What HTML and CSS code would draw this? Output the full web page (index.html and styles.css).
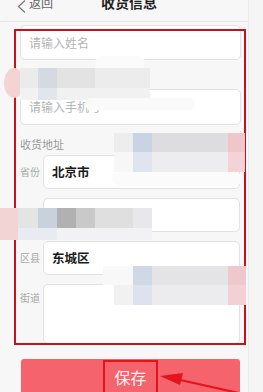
FILE: index.html
```html
<!DOCTYPE html>
<html lang="zh-CN">
<head>
<meta charset="utf-8">
<title>收货信息</title>
<link rel="stylesheet" href="styles.css">
</head>
<body>
<div class="page">
  <div class="main">
    <header class="topbar">
      <div class="back">
        <svg class="chev" width="9" height="13" viewBox="0 0 9 13"><polyline points="8,0.5 1.5,6.5 8,12.5" fill="none" stroke="#777" stroke-width="1.2"/></svg>
        <span>返回</span>
      </div>
      <div class="title">收货信息</div>
      <div></div>
    </header>
    <main class="form">
      <div class="field"><span class="ph">请输入姓名</span></div>
      <div class="field phone"><span class="ph">请输入手机号</span></div>
      <div class="section-label">收货地址</div>
      <div class="row first"><span class="lbl">省份</span><div class="box"><span class="val">北京市</span></div></div>
      <div class="row"><span class="lbl">城市</span><div class="box"></div></div>
      <div class="row"><span class="lbl">区县</span><div class="box"><span class="val">东城区</span></div></div>
      <div class="row street"><span class="lbl">街道</span><div class="box area"></div></div>
    </main>
    <div class="save-wrap"><button class="save">保存</button></div>
  </div>
  <div class="edge"></div>

  <svg class="overlay" width="263" height="392" viewBox="0 0 263 392">
    <defs>
      <filter id="soft" x="-10%" y="-10%" width="120%" height="120%"><feGaussianBlur stdDeviation="0.7"/></filter>
    </defs>
    <rect x="15" y="30" width="230" height="314" fill="none" stroke="#c8121b" stroke-width="2"/>
    <rect x="104" y="361" width="53" height="34" fill="none" stroke="#e3141d" stroke-width="2"/>
    <line x1="252" y1="396" x2="176" y2="379" stroke="#e3141d" stroke-width="2.2"/>
    <polygon points="160,376 183,373 180,385" fill="#e3141d"/>
    <g filter="url(#soft)">
      <!-- mosaic A -->
      <rect x="95" y="56" width="50" height="14" rx="7" fill="#fbfbfb"/>
      <ellipse cx="14" cy="83" rx="10" ry="15" fill="#f4d3d3"/>
      <rect x="20" y="68" width="18" height="20" fill="#ebebeb"/>
      <rect x="38" y="68" width="19" height="20" fill="#d5d9e1"/>
      <rect x="57" y="68" width="38" height="20" fill="#e3e3e3"/>
      <rect x="95" y="68" width="55" height="20" fill="#ececec"/>
      <rect x="20" y="88" width="18" height="12" fill="#f2f2f2"/>
      <rect x="38" y="88" width="19" height="12" fill="#e2e6ec"/>
      <rect x="57" y="88" width="93" height="12" fill="#f1f1f1"/>
      <rect x="85" y="98" width="110" height="12" rx="6" fill="#fafafa"/>
      <!-- mosaic B -->
      <rect x="114" y="133" width="19" height="19" fill="#ededee"/>
      <rect x="133" y="133" width="19" height="19" fill="#c9d3e3"/>
      <rect x="152" y="133" width="76" height="19" fill="#dddddf"/>
      <rect x="228" y="133" width="17" height="19" fill="#efc7cb"/>
      <rect x="114" y="152" width="19" height="20" fill="#f7f7f7"/>
      <rect x="133" y="152" width="19" height="20" fill="#dfe5ee"/>
      <rect x="152" y="152" width="76" height="20" fill="#ededef"/>
      <rect x="228" y="152" width="17" height="20" fill="#f3d3d6"/>
      <rect x="112" y="172" width="130" height="14" rx="7" fill="#fbfbfb"/>
      <!-- mosaic C -->
      <rect x="0" y="208" width="18" height="32" fill="#f3d4d4"/>
      <rect x="18" y="208" width="20" height="20" fill="#e3e5e3"/>
      <rect x="38" y="208" width="19" height="20" fill="#c9d1dc"/>
      <rect x="57" y="208" width="19" height="20" fill="#b1b1b2"/>
      <rect x="76" y="208" width="19" height="20" fill="#c9c9c9"/>
      <rect x="95" y="208" width="38" height="20" fill="#dfdfdf"/>
      <rect x="133" y="208" width="19" height="20" fill="#e8e8ea"/>
      <rect x="18" y="228" width="39" height="12" fill="#e8ebf1"/>
      <rect x="57" y="228" width="95" height="12" fill="#f2f2f4"/>
      <!-- mosaic D -->
      <rect x="103" y="266" width="30" height="19" fill="#f8f8f8"/>
      <rect x="133" y="266" width="19" height="19" fill="#cfd8e5"/>
      <rect x="152" y="266" width="76" height="19" fill="#e4e4e6"/>
      <rect x="228" y="266" width="18" height="19" fill="#efc8cc"/>
      <rect x="114" y="285" width="19" height="20" fill="#f1f1f1"/>
      <rect x="133" y="285" width="19" height="20" fill="#dde3ec"/>
      <rect x="152" y="285" width="76" height="20" fill="#ececee"/>
      <rect x="228" y="285" width="18" height="20" fill="#f2d0d4"/>
    </g>
  </svg>
</div>
</body>
</html>
```

FILE: styles.css
```css
* { box-sizing: border-box; margin: 0; padding: 0; }
html, body { width: 263px; height: 392px; overflow: hidden; }
body {
  background: #f4f4f4;
  font-family: "Noto Sans CJK SC", "Noto Sans", sans-serif;
}
.page { position: relative; display: flex; width: 263px; height: 392px; }
.main { width: 249px; height: 392px; background: #f7f7f7; border-right: 1px solid #ebebeb; }
.edge { flex: 1; background: #f5f5f5; }

.topbar {
  height: 22px;
  border-bottom: 1px solid #e6e6e6;
  display: grid;
  grid-template-columns: 60px 1fr 50px;
  align-items: start;
  overflow: hidden;
}
.back {
  display: flex;
  align-items: flex-start;
  gap: 3px;
  padding-left: 17px;
  margin-top: -4px;
  color: #666;
  font-size: 12px;
  line-height: 14px;
}
.chev { margin-top: 4px; flex: none; }
.title {
  text-align: center;
  font-size: 14px;
  font-weight: 700;
  line-height: 16px;
  margin-top: -6px;
  color: #222;
}

.form { padding: 3px 8px 0 20px; }
.field {
  width: 221px;
  height: 35px;
  background: #fff;
  border: 1px solid #e2e2e2;
  border-radius: 5px;
  display: flex;
  align-items: center;
  padding-left: 8px;
}
.field.phone { margin-top: 29px; height: 36px; }
.ph { font-size: 12px; line-height: 14px; color: #b5b5b5; }
.section-label {
  margin-top: 11px;
  height: 16px;
  font-size: 11px;
  line-height: 16px;
  color: #9a9a9a;
}
.row { display: flex; align-items: center; height: 34px; margin-top: 9px; }
.row.first { margin-top: 3px; }
.lbl { width: 23px; flex: none; font-size: 10px; line-height: 12px; color: #a8a8a8; }
.box {
  width: 197px;
  height: 100%;
  background: #fff;
  border: 1px solid #e2e2e2;
  border-radius: 5px;
  display: flex;
  align-items: center;
  padding-left: 8px;
}
.val { font-size: 12.5px; line-height: 14px; font-weight: 700; color: #1a1a1a; }
.row.street { height: 60px; align-items: flex-start; }
.row.street .lbl { padding-top: 8px; }

.save-wrap { padding: 15px 8px 0 21px; }
.save {
  display: block;
  width: 219px;
  height: 40px;
  border: 0;
  border-radius: 3px;
  background: #f5646c;
  color: #fff3f3;
  font-family: inherit;
  font-size: 16px;
  line-height: 18px;
  padding-top: 0;
  padding-bottom: 4px;
}

.overlay { position: absolute; left: 0; top: 0; pointer-events: none; }
```
